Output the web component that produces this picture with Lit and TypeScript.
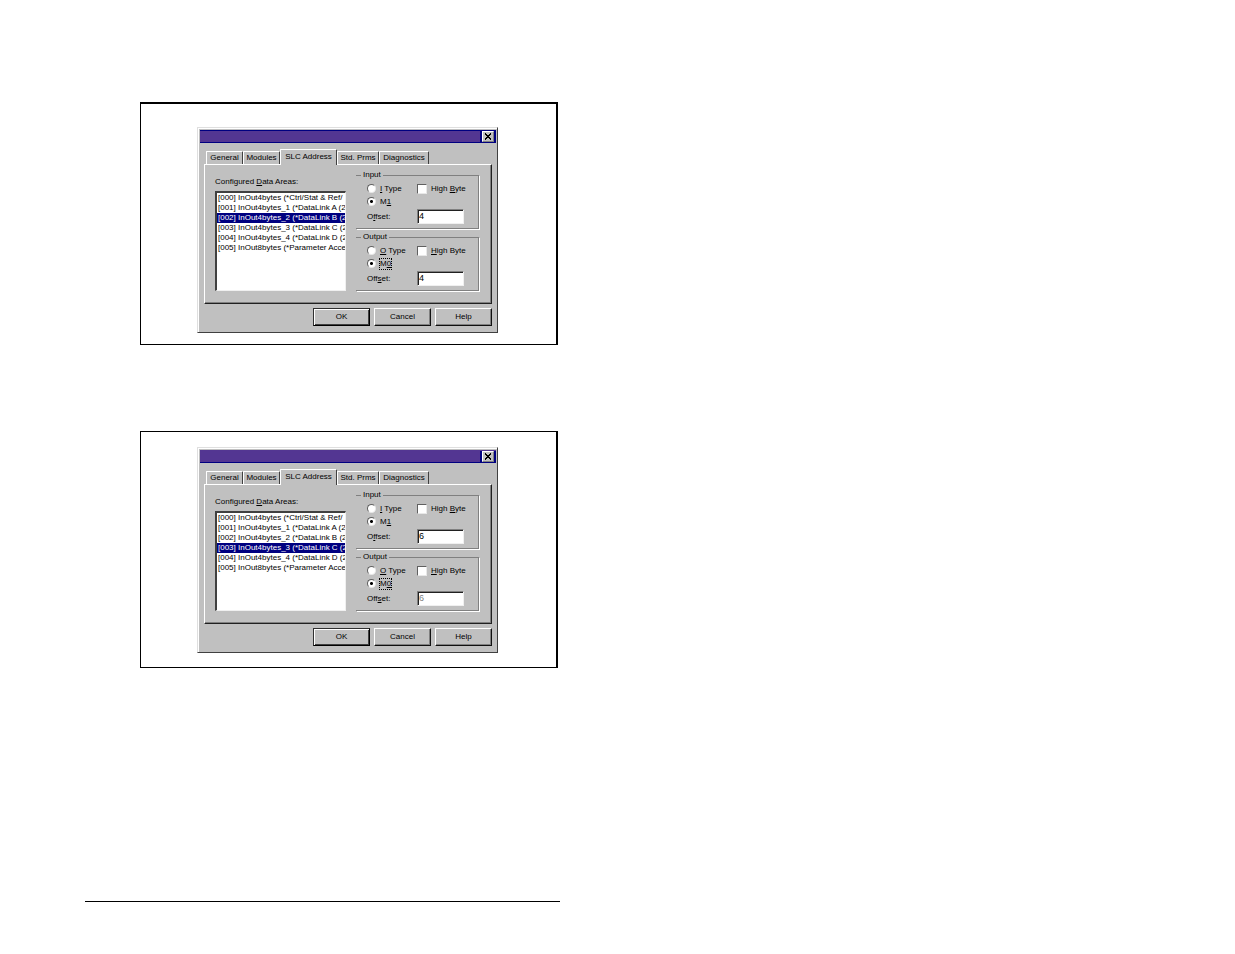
import { LitElement, html, css } from "lit";
import { customElement, property } from "lit/decorators.js";

const TABS = ["General", "Modules", "SLC Address", "Std. Prms", "Diagnostics"];

const AREAS = [
  "[000] InOut4bytes (*Ctrl/Stat & Ref/",
  "[001] InOut4bytes_1 (*DataLink A (2",
  "[002] InOut4bytes_2 (*DataLink B (2",
  "[003] InOut4bytes_3 (*DataLink C (2",
  "[004] InOut4bytes_4 (*DataLink D (2",
  "[005] InOut8bytes (*Parameter Acce",
];

@customElement("slc-dialog")
class SlcDialog extends LitElement {
  @property({ type: Number }) selected = 0;
  @property() offset = "";
  @property({ type: Boolean }) locked = false;

  static styles = css`
    :host {
      display: block;
      box-sizing: border-box;
      padding: 2px 1px 6px 2px;
      background: #c0c0c0;
      border: 1px solid;
      border-color: #dfdfdf #404040 #404040 #dfdfdf;
      box-shadow: inset 1px 1px #fff;
      color: #000;
      font: 8px/10px "Liberation Sans", Arial, sans-serif;
    }
    * {
      box-sizing: border-box;
    }
    button,
    input,
    select {
      font: inherit;
      color: inherit;
      margin: 0;
      padding: 0;
      border-radius: 0;
      outline: none;
    }
    .title {
      display: flex;
      justify-content: flex-end;
      height: 13px;
      background: #533692;
      border: solid #000080;
      border-width: 1px 0;
    }
    :host([locked]) .title {
      border-top-color: #533692;
    }
    .corner {
      display: flex;
      padding: 0 2px;
      background: #000080;
    }
    .close {
      display: grid;
      place-items: center;
      width: 12px;
      height: 11px;
      background: #c0c0c0;
      border: 1px solid;
      border-color: #fff #808080 #808080 #fff;
    }
    .tabs {
      display: grid;
      grid-template-columns: 37fr 37fr 57fr 42fr 50fr 63fr;
      align-items: end;
      margin: 6px 4px 0 6px;
    }
    .tab {
      height: 13px;
      background: #c0c0c0;
      border: 1px solid;
      border-color: #fff #404040 transparent #fff;
      border-bottom: 0;
      border-radius: 1px 1px 0 0;
      white-space: nowrap;
      min-width: 0;
    }
    .tab.active {
      position: relative;
      height: 16px;
      margin-bottom: -1px;
      padding-bottom: 2px;
    }
    .panel {
      display: grid;
      grid-template-columns: 1fr 123px;
      gap: 10px;
      margin: 0 4px;
      padding: 5px 12px 12px 10px;
      border: 1px solid;
      border-color: #fff #202020 #202020 #fff;
      box-shadow: inset -1px -1px #808080;
    }
    .areas {
      display: flex;
      flex-direction: column;
      gap: 4px;
      padding-top: 7px;
      min-width: 0;
    }
    .list {
      width: 100%;
      height: 100px;
      overflow: hidden;
      background: #fff;
      border: 2px solid;
      border-color: #404040 #f0f0f0 #f0f0f0 #404040;
      border-width: 2px 1px 1px 2px;
    }
    .list option {
      min-height: 10px;
      height: 10px;
      padding: 0 0 0 1px;
      line-height: 10px;
      overflow: hidden;
      color: #000;
    }
    .list option:checked {
      background: linear-gradient(#000080, #000080);
      color: #fff;
    }
    .groups {
      display: flex;
      flex-direction: column;
      gap: 3px;
    }
    fieldset {
      min-width: 0;
      margin: 0;
      padding: 3px 0 4px 11px;
      border: 1px solid #808080;
      border-left: 0;
      box-shadow: 1px 1px #fff;
    }
    legend {
      padding: 0 2px;
      margin-left: -6px;
      background: #c0c0c0;
    }
    .fields {
      display: grid;
      grid-template-columns: 50px 1fr;
      grid-template-rows: 11px 11px 15px;
      gap: 2px 0;
      align-items: center;
    }
    .choice {
      display: flex;
      align-items: center;
      gap: 4px;
      white-space: nowrap;
    }
    input[type="radio"],
    input[type="checkbox"] {
      appearance: none;
      flex: none;
      width: 10px;
      height: 10px;
      background: #fff;
      border: 1px solid;
      border-color: #606060 #e8e8e8 #e8e8e8 #606060;
    }
    input[type="radio"] {
      width: 9px;
      height: 9px;
      border-radius: 50%;
    }
    input[type="radio"]:checked {
      background: radial-gradient(circle, #000 0 1px, #fff 2px);
    }
    .only {
      grid-column: 1 / -1;
    }
    .focus {
      outline: 1px dotted #000;
    }
    .offset {
      width: 47px;
      height: 15px;
      padding: 0 1px 1px;
      background: #fff;
      border: 1px solid;
      border-color: #808080 #f0f0f0 #f0f0f0 #808080;
      box-shadow: inset 1px 1px #202020;
      font-size: 9px;
    }
    .offset:disabled {
      color: #808080;
    }
    .actions {
      display: flex;
      justify-content: flex-end;
      gap: 4px;
      margin: 4px 4px 0;
    }
    .action {
      width: 57px;
      height: 18px;
      background: #c0c0c0;
      border: 1px solid;
      border-color: #fff #101010 #101010 #fff;
      box-shadow: inset -1px -1px #808080;
    }
    .action.default {
      border-color: #303030 #000 #000 #303030;
      box-shadow: inset 1px 1px #fff, inset -1px -1px #404040;
    }
  `;

  private group(
    id: string,
    legend: string,
    type: unknown,
    mode: unknown,
    high: unknown,
    offset: unknown,
    disabled: boolean
  ) {
    return html`<fieldset>
      <legend>${legend}</legend>
      <div class="fields">
        <label class="choice"><input type="radio" name=${id} /><span>${type}</span></label>
        <label class="choice"><input type="checkbox" /><span>${high}</span></label>
        <label class="choice only"><input type="radio" name=${id} checked />${mode}</label>
        <label for=${id}>${offset}</label>
        <input class="offset" id=${id} type="text" .value=${this.offset} ?disabled=${disabled} />
      </div>
    </fieldset>`;
  }

  render() {
    return html`
      <div class="title">
        <div class="corner">
          <button class="close" aria-label="Close">
            <svg width="8" height="7" viewBox="0 0 8 7" shape-rendering="crispEdges">
              <path
                d="M1 0h1v1H1zM6 0h1v1H6zM1 1h2v1H1zM5 1h2v1H5zM2 2h4v1H2zM3 3h2v1H3zM2 4h4v1H2zM1 5h2v1H1zM5 5h2v1H5zM1 6h1v1H1zM6 6h1v1H6z"
              />
            </svg>
          </button>
        </div>
      </div>
      <div class="tabs" role="tablist">
        ${TABS.map(
          (t, i) => html`<button
            role="tab"
            class="tab ${i === 2 ? "active" : ""}"
            aria-selected=${i === 2 ? "true" : "false"}
          >${t}</button>`
        )}
      </div>
      <div class="panel">
        <div class="areas">
          <label for="areas">Configured <u>D</u>ata Areas:</label>
          <select class="list" id="areas" size="9">
            ${AREAS.map((a, i) => html`<option ?selected=${i === this.selected}>${a}</option>`)}
          </select>
        </div>
        <div class="groups">
          ${this.group(
            "input",
            "Input",
            html`<u>I</u> Type`,
            html`<span>M<u>1</u></span>`,
            html`High <u>B</u>yte`,
            html`O<u>f</u>fset:`,
            false
          )}
          ${this.group(
            "output",
            "Output",
            html`<u>O</u> Type`,
            html`<span class="focus">M<u>0</u></span>`,
            html`<u>H</u>igh Byte`,
            html`Off<u>s</u>et:`,
            this.locked
          )}
        </div>
      </div>
      <div class="actions">
        <button class="action default">OK</button>
        <button class="action">Cancel</button>
        <button class="action">Help</button>
      </div>
    `;
  }
}

@customElement("app-root")
class AppRoot extends LitElement {
  static styles = css`
    :host {
      display: block;
      min-height: 100vh;
      background: #fff;
    }
    .column {
      max-width: 475px;
      margin-left: 85px;
      padding-top: 102px;
    }
    .figure {
      margin: 0 2px 86px 55px;
      padding: 23px 58px 11px 56px;
      border: solid #000;
      border-width: 2px 2px 1px 1px;
    }
    .figure.second {
      margin-bottom: 0;
      padding-top: 15px;
      padding-bottom: 14px;
      border-top-width: 1px;
    }
    .rule {
      margin: 233px 0 0;
      border: 0;
      border-top: 1px solid #000;
    }
  `;

  render() {
    return html`<main class="column">
      <figure class="figure"><slc-dialog .selected=${2} offset="4"></slc-dialog></figure>
      <figure class="figure second"><slc-dialog .selected=${3} offset="6" locked></slc-dialog></figure>
      <hr class="rule" />
    </main>`;
  }
}
